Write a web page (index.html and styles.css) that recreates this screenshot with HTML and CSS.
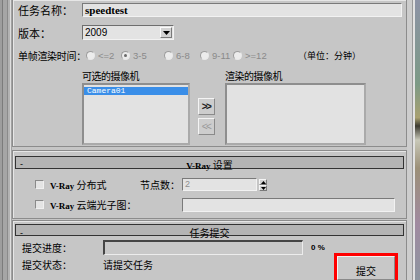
FILE: index.html
```html
<!DOCTYPE html>
<html lang="zh-CN">
<head>
  <meta charset="UTF-8">
  <meta name="viewport" content="width=device-width, initial-scale=1.0">
  <title>任务提交</title>
  <link rel="stylesheet" href="styles.css">
</head>
<body>
  <div class="frame">
    <div class="edge-left"></div>
    <div class="main">

      <div class="group group-job">
        <div class="row row-name">
          <span class="label big">任务名称：</span>
          <div class="field field-name">speedtest</div>
        </div>
        <div class="row row-version">
          <span class="label big">版本：</span>
          <div class="select">
            <span class="select-value">2009</span>
            <span class="select-btn"><svg width="7" height="4" viewBox="0 0 7 4"><path d="M0 0h7L3.5 4z" fill="#000"/></svg></span>
          </div>
        </div>
        <div class="row row-time">
          <span class="label">单帧渲染时间：</span>
          <div class="radios">
            <span class="radio"><i class="dot"></i>&lt;=2</span>
            <span class="radio checked"><i class="dot"></i>3-5</span>
            <span class="radio"><i class="dot"></i>6-8</span>
            <span class="radio"><i class="dot"></i>9-11</span>
            <span class="radio"><i class="dot"></i>&gt;=12</span>
          </div>
          <span class="unit">（单位：分钟）</span>
        </div>
        <div class="cameras">
          <div class="cam-col cam-free">
            <div class="cam-title">可选的摄像机</div>
            <div class="listbox">
              <div class="list-item selected">Camera01</div>
            </div>
          </div>
          <div class="mover">
            <button class="btn-move">&gt;&gt;</button>
            <button class="btn-move" disabled>&lt;&lt;</button>
          </div>
          <div class="cam-col cam-render">
            <div class="cam-title">渲染的摄像机</div>
            <div class="listbox"></div>
          </div>
        </div>
      </div>

      <div class="group group-vray">
        <div class="rollout-bar">
          <span class="bar-minus">-</span>
          <span class="bar-title"><span class="latin">V-Ray</span> 设置</span>
        </div>
        <div class="opt-row">
          <span class="check"></span>
          <span class="opt-text opt-dist"><span class="latin">V-Ray</span> 分布式</span>
          <span class="opt-label">节点数：</span>
          <div class="field field-nodes">2</div>
          <span class="spinner">
            <span class="spin-btn"><svg width="5" height="3" viewBox="0 0 5 3"><path d="M0 3h5L2.5 0z" fill="#000"/></svg></span>
            <span class="spin-btn"><svg width="5" height="3" viewBox="0 0 5 3"><path d="M0 0h5L2.5 3z" fill="#000"/></svg></span>
          </span>
        </div>
        <div class="opt-row">
          <span class="check"></span>
          <span class="opt-text opt-cloud"><span class="latin">V-Ray</span> 云端光子图：</span>
          <div class="field field-cloud"></div>
        </div>
      </div>

      <div class="group group-submit">
        <div class="rollout-bar">
          <span class="bar-minus">-</span>
          <span class="bar-title">任务提交</span>
        </div>
        <div class="sub-row">
          <span class="sub-label">提交进度：</span>
          <div class="progress"></div>
          <span class="percent">0 %</span>
        </div>
        <div class="sub-row row-status">
          <span class="sub-label">提交状态：</span>
          <span class="status">请提交任务</span>
          <button class="btn-submit">提交</button>
        </div>
      </div>

    </div>
    <div class="edge-right"></div>
  </div>
</body>
</html>
```

FILE: styles.css
```css
* {
  box-sizing: border-box;
}

body {
  margin: 0;
  width: 420px;
  height: 280px;
  overflow: hidden;
  background-color: #c6c6c6;
  font-family: "Noto Sans CJK SC", "Liberation Sans", sans-serif;
  font-size: 10px;
  color: #000;
}

.frame {
  display: flex;
  height: 280px;
}

.edge-left {
  width: 12px;
  flex: none;
  background: linear-gradient(to right, #9e9e9e 0 2px, #7c7c7c 2px 3px, #a6a6a6 3px 7px, #8b8b8b 7px 8px, #b3b3b3 8px 10px, #dedede 10px 11px, #a2a2a2 11px 12px);
}

.edge-right {
  width: 13px;
  flex: none;
  background:
    linear-gradient(to right, #cdcdcd 0 5px, #9a9a9a 5px 6px, #e2e2e2 6px 8px, transparent 8px),
    linear-gradient(to bottom, #8d93a6, #7c9a86 30%, #a8a070 42%, #3c3a30 45%, #c8c8b8 50%, #9c9078 60%, #a08aa0 80%, #8e96a0);
}

.main {
  width: 395px;
  flex: none;
  display: flex;
  flex-direction: column;
}

.group {
  border: 1px solid #8c8c8c;
  box-shadow: inset 1px 1px 0 #e6e6e6;
}

/* ---- job section ---- */
.group-job {
  height: 149px;
  border-top: none;
  padding: 3px 0 0 5px;
}

.row {
  display: flex;
  align-items: center;
}

.label {
  width: 64px;
  flex: none;
  font-size: 10px;
  letter-spacing: -0.3px;
  white-space: nowrap;
}

.label.big {
  font-size: 11px;
  letter-spacing: 0;
}

.row-name {
  height: 14px;
}

.row-version {
  height: 15px;
  margin-top: 8px;
}

.row-time {
  height: 14px;
  margin-top: 8px;
}

.field {
  height: 100%;
  background-color: #e3e3e3;
  border-top: 1px solid #7a7a7a;
  border-left: 1px solid #7a7a7a;
  border-right: 1px solid #f2f2f2;
  border-bottom: 1px solid #f2f2f2;
  display: flex;
  align-items: center;
  padding-left: 2px;
}

.field-name {
  width: 320px;
  font-family: "Liberation Serif", serif;
  font-weight: bold;
  font-size: 11px;
}

.select {
  width: 92px;
  height: 15px;
  display: flex;
  align-items: center;
  justify-content: space-between;
  background-color: #e3e3e3;
  border-top: 1px solid #6e6e6e;
  border-left: 1px solid #6e6e6e;
  border-right: 1px solid #f2f2f2;
  border-bottom: 1px solid #f2f2f2;
  padding: 0 1px 0 2px;
}

.select-value {
  font-family: "Liberation Sans", sans-serif;
  font-size: 10px;
}

.select-btn {
  width: 12px;
  height: 11px;
  background-color: #d2d2d2;
  border-top: 1px solid #fafafa;
  border-left: 1px solid #fafafa;
  border-right: 1px solid #7a7a7a;
  border-bottom: 1px solid #7a7a7a;
  display: flex;
  align-items: center;
  justify-content: center;
}

.radios {
  display: grid;
  grid-template-columns: 35px 43px 36px 33px 65px;
  margin-left: 4px;
}

.radio {
  display: flex;
  align-items: center;
  gap: 3px;
  font-family: "Liberation Sans", sans-serif;
  font-size: 9.5px;
  color: #8a8a8a;
}

.dot {
  width: 9px;
  height: 9px;
  flex: none;
  border-radius: 50%;
  background-color: #ececec;
  border: 1px solid #9c9c9c;
  border-bottom-color: #e8e8e8;
  border-right-color: #e8e8e8;
  display: flex;
  align-items: center;
  justify-content: center;
}

.radio.checked .dot::after {
  content: "";
  width: 3px;
  height: 3px;
  border-radius: 50%;
  background-color: #6a6a6a;
}

.unit {
  font-size: 9px;
  white-space: nowrap;
}

.cameras {
  display: flex;
  margin: 7px 0 0 64px;
}

.cam-title {
  height: 14px;
  font-size: 10px;
  line-height: 14px;
  letter-spacing: -0.5px;
  white-space: nowrap;
}

.cam-free {
  width: 108px;
}

.cam-render {
  width: 141px;
}

.listbox {
  height: 62px;
  background-color: #e2e2e2;
  border: 2px solid #8e8e8e;
  border-right-color: #aaaaaa;
  border-bottom-color: #aaaaaa;
  padding: 2px 0 0 0;
}

.list-item {
  height: 8px;
  padding-left: 3px;
  font-family: "Liberation Mono", monospace;
  font-size: 8px;
  line-height: 8px;
  color: #fff;
}

.list-item.selected {
  background-color: #3a8ee8;
}

.mover {
  display: flex;
  flex-direction: column;
  gap: 3px;
  padding-top: 29px;
  margin: 0 10px 0 8px;
}

.btn-move {
  width: 17px;
  height: 17px;
  padding: 0 1px 0 0;
  background-color: #cdcdcd;
  border-top: 1px solid #f4f4f4;
  border-left: 1px solid #f4f4f4;
  border-right: 1px solid #8a8a8a;
  border-bottom: 1px solid #8a8a8a;
  font-family: "Liberation Sans", sans-serif;
  font-size: 10px;
  font-weight: bold;
  letter-spacing: -1.5px;
  color: #222;
}

.btn-move:disabled {
  color: #9a9a9a;
  font-weight: normal;
}

/* ---- rollout bars ---- */
.rollout-bar {
  display: grid;
  grid-template-columns: 1fr auto 1fr;
  align-items: center;
  background-color: #b4b4b4;
  border: 1px solid #333;
  font-size: 10px;
}

.bar-minus {
  padding-left: 4px;
  font-family: "Liberation Sans", sans-serif;
  font-size: 9px;
}

.latin {
  font-family: "Liberation Serif", serif;
  font-size: 9px;
  font-weight: bold;
}

/* ---- vray section ---- */
.group-vray {
  height: 70px;
  margin-top: 3px;
  padding: 5px 2px 0 2px;
}

.group-vray .rollout-bar {
  height: 13px;
}

.opt-row {
  display: flex;
  align-items: center;
  height: 13px;
  margin-top: 9px;
}

.opt-row + .opt-row {
  height: 14px;
  margin-top: 7px;
}

.check {
  width: 9px;
  height: 9px;
  margin-left: 20px;
  background-color: #e4e4e4;
  border-top: 1px solid #8a8a8a;
  border-left: 1px solid #8a8a8a;
  border-right: 1px solid #f0f0f0;
  border-bottom: 1px solid #f0f0f0;
}

.opt-text {
  margin-left: 6px;
  white-space: nowrap;
}

.opt-dist {
  width: 90px;
}

.opt-cloud {
  width: 132px;
}

.opt-label {
  width: 42px;
  white-space: nowrap;
}

.field-nodes {
  width: 75px;
  font-family: "Liberation Sans", sans-serif;
  font-size: 9px;
  color: #909090;
}

.field-cloud {
  width: 213px;
}

.spinner {
  display: flex;
  flex-direction: column;
  margin-left: 2px;
  margin-top: 2px;
}

.spin-btn {
  width: 8px;
  height: 6px;
  background-color: #d2d2d2;
  border-top: 1px solid #f4f4f4;
  border-left: 1px solid #f4f4f4;
  border-right: 1px solid #7a7a7a;
  border-bottom: 1px solid #7a7a7a;
  display: flex;
  align-items: center;
  justify-content: center;
}

/* ---- submit section ---- */
.group-submit {
  flex: 1;
  margin-top: 1px;
  border-bottom: none;
  padding: 3px 2px 0 2px;
}

.group-submit .rollout-bar {
  height: 12px;
}

.sub-row {
  display: flex;
  align-items: center;
  height: 15px;
  margin: 4px 0 0 7px;
}

.sub-label {
  width: 81px;
  flex: none;
  white-space: nowrap;
}

.progress {
  width: 200px;
  height: 15px;
  background-color: #c8c8c8;
  border-top: 2px solid #454545;
  border-left: 2px solid #454545;
  border-right: 1px solid #ececec;
  border-bottom: 1px solid #ececec;
}

.percent {
  margin-left: 8px;
  font-family: "Liberation Sans", sans-serif;
  font-size: 8px;
  font-weight: bold;
}

.row-status {
  align-items: flex-start;
  height: 24px;
  margin-top: 1px;
}

.row-status .sub-label,
.status {
  line-height: 18px;
}

.btn-submit {
  width: 58px;
  height: 24px;
  margin: 0 9px 0 auto;
  padding: 6px 0 0 0;
  background-color: #c8c8c8;
  border-top: 1px solid #f2f2f2;
  border-left: 1px solid #f2f2f2;
  border-right: 1px solid #8a8a8a;
  border-bottom: 1px solid #8a8a8a;
  outline: 3px solid #ff0000;
  font-family: "Noto Sans CJK SC", sans-serif;
  font-size: 10px;
  line-height: 12px;
  color: #000;
}
```
